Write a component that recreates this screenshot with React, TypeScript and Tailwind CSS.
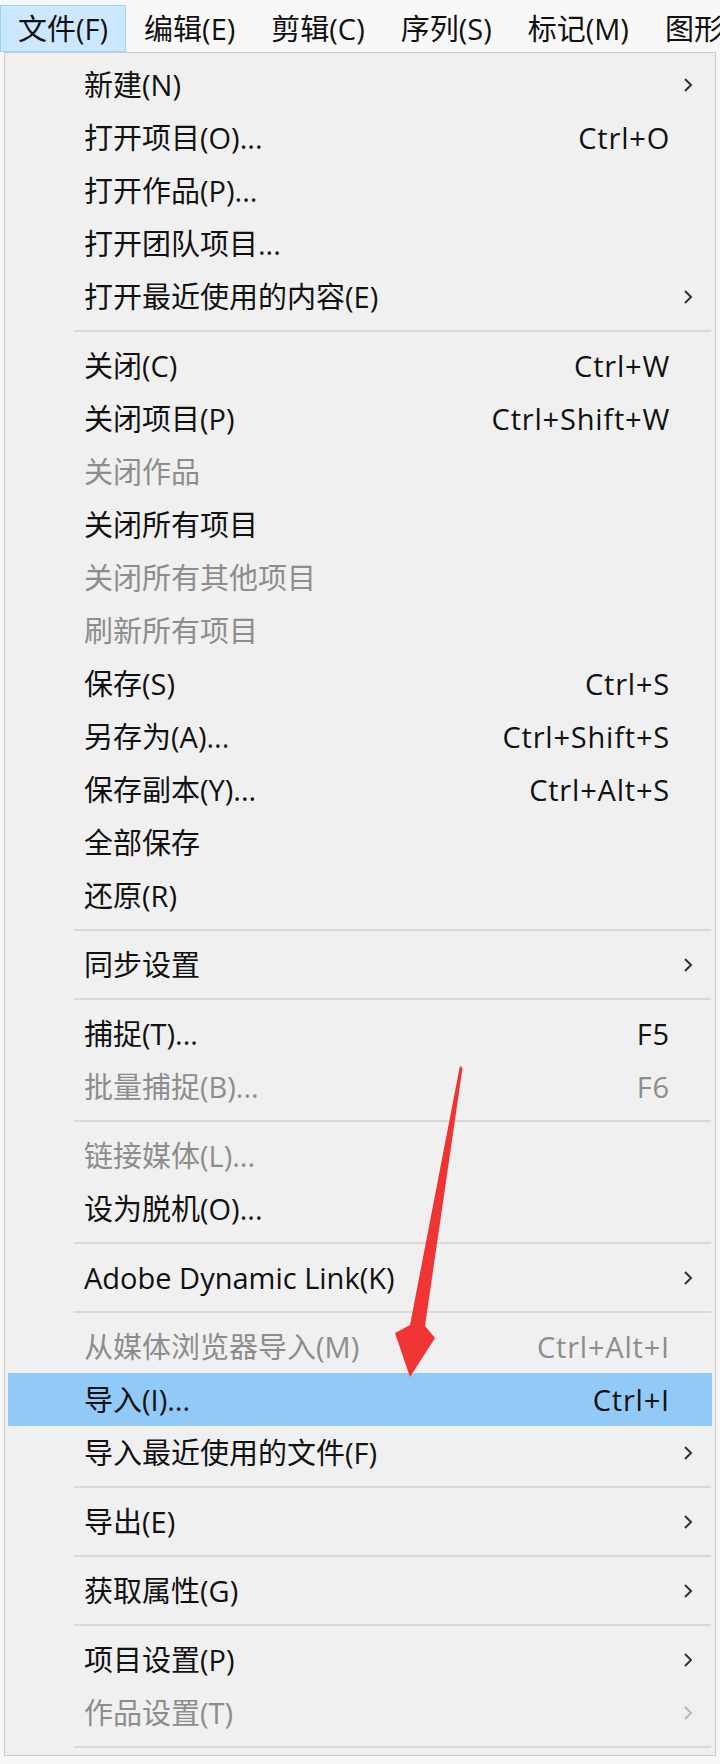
type Item =
  | { sep: true }
  | {
      sep?: false;
      label: string;
      shortcut?: string;
      sub?: boolean;
      off?: boolean;
      active?: boolean;
    };

const bar = ["文件(F)", "编辑(E)", "剪辑(C)", "序列(S)", "标记(M)", "图形(G)"];

const items: Item[] = [
  { label: "新建(N)", sub: true },
  { label: "打开项目(O)...", shortcut: "Ctrl+O" },
  { label: "打开作品(P)..." },
  { label: "打开团队项目..." },
  { label: "打开最近使用的内容(E)", sub: true },
  { sep: true },
  { label: "关闭(C)", shortcut: "Ctrl+W" },
  { label: "关闭项目(P)", shortcut: "Ctrl+Shift+W" },
  { label: "关闭作品", off: true },
  { label: "关闭所有项目" },
  { label: "关闭所有其他项目", off: true },
  { label: "刷新所有项目", off: true },
  { label: "保存(S)", shortcut: "Ctrl+S" },
  { label: "另存为(A)...", shortcut: "Ctrl+Shift+S" },
  { label: "保存副本(Y)...", shortcut: "Ctrl+Alt+S" },
  { label: "全部保存" },
  { label: "还原(R)" },
  { sep: true },
  { label: "同步设置", sub: true },
  { sep: true },
  { label: "捕捉(T)...", shortcut: "F5" },
  { label: "批量捕捉(B)...", shortcut: "F6", off: true },
  { sep: true },
  { label: "链接媒体(L)...", off: true },
  { label: "设为脱机(O)..." },
  { sep: true },
  { label: "Adobe Dynamic Link(K)", sub: true },
  { sep: true },
  { label: "从媒体浏览器导入(M)", shortcut: "Ctrl+Alt+I", off: true },
  { label: "导入(I)...", shortcut: "Ctrl+I", active: true },
  { label: "导入最近使用的文件(F)", sub: true },
  { sep: true },
  { label: "导出(E)", sub: true },
  { sep: true },
  { label: "获取属性(G)", sub: true },
  { sep: true },
  { label: "项目设置(P)", sub: true },
  { label: "作品设置(T)", sub: true, off: true },
  { sep: true },
];

const Chevron = ({ off }: { off?: boolean }) => (
  <svg width="10" height="16" viewBox="0 0 10 16" fill="none">
    <polyline
      points="2,2 8,8 2,14"
      stroke={off ? "#b8b8b8" : "#333333"}
      strokeWidth="2"
    />
  </svg>
);

const App = () => {
  return (
    <div className="relative w-[720px] h-[1764px] overflow-hidden bg-[#f8f8f8] font-['Open_Sans','Noto_Sans_CJK_SC',sans-serif] text-[29px] text-[#111]">
      {/* menu bar */}
      <div className="flex h-[52px] pt-[5px] whitespace-nowrap">
        {bar.map((b, i) => (
          <div
            key={b}
            className={
              i === 0
                ? "flex shrink-0 items-center px-[17px] border border-[#99d1ff] bg-[#cce8ff]"
                : "flex shrink-0 items-center px-[17px] border border-transparent"
            }
          >
            {b}
          </div>
        ))}
      </div>

      {/* dropdown */}
      <div className="ml-[4px] w-[712px] border border-[#cacaca] bg-[#f0f0f0] pt-[5px] px-[3px]">
        {items.map((it, i) =>
          it.sep ? (
            <div key={i} className="flex h-[16px] items-center">
              <div className="ml-[66px] mr-[1px] h-[2px] flex-1 bg-[#d9d9d9]" />
            </div>
          ) : (
            <div
              key={i}
              className={`flex h-[53px] items-center pl-[76px] whitespace-nowrap ${
                it.active ? "bg-[#91c9f7]" : ""
              } ${it.off ? "text-[#8d8d8d]" : ""}`}
            >
              <span className="flex-1">{it.label}</span>
              {it.shortcut && (
                <span className="tracking-[0.8px] mr-[-1px]">{it.shortcut}</span>
              )}
              <span className="flex w-[43px] items-center pl-[14px]">
                {it.sub && <Chevron off={it.off} />}
              </span>
            </div>
          )
        )}
      </div>

      {/* red arrow annotation */}
      <svg
        className="pointer-events-none absolute left-0 top-0"
        width="720"
        height="1764"
        viewBox="0 0 720 1764"
      >
        <polygon
          points="460,1066 462.5,1068 425,1326 435,1338 410,1377 395,1333 410,1325 459.5,1068"
          fill="#ef3434"
        />
      </svg>
    </div>
  );
};

export default App;
